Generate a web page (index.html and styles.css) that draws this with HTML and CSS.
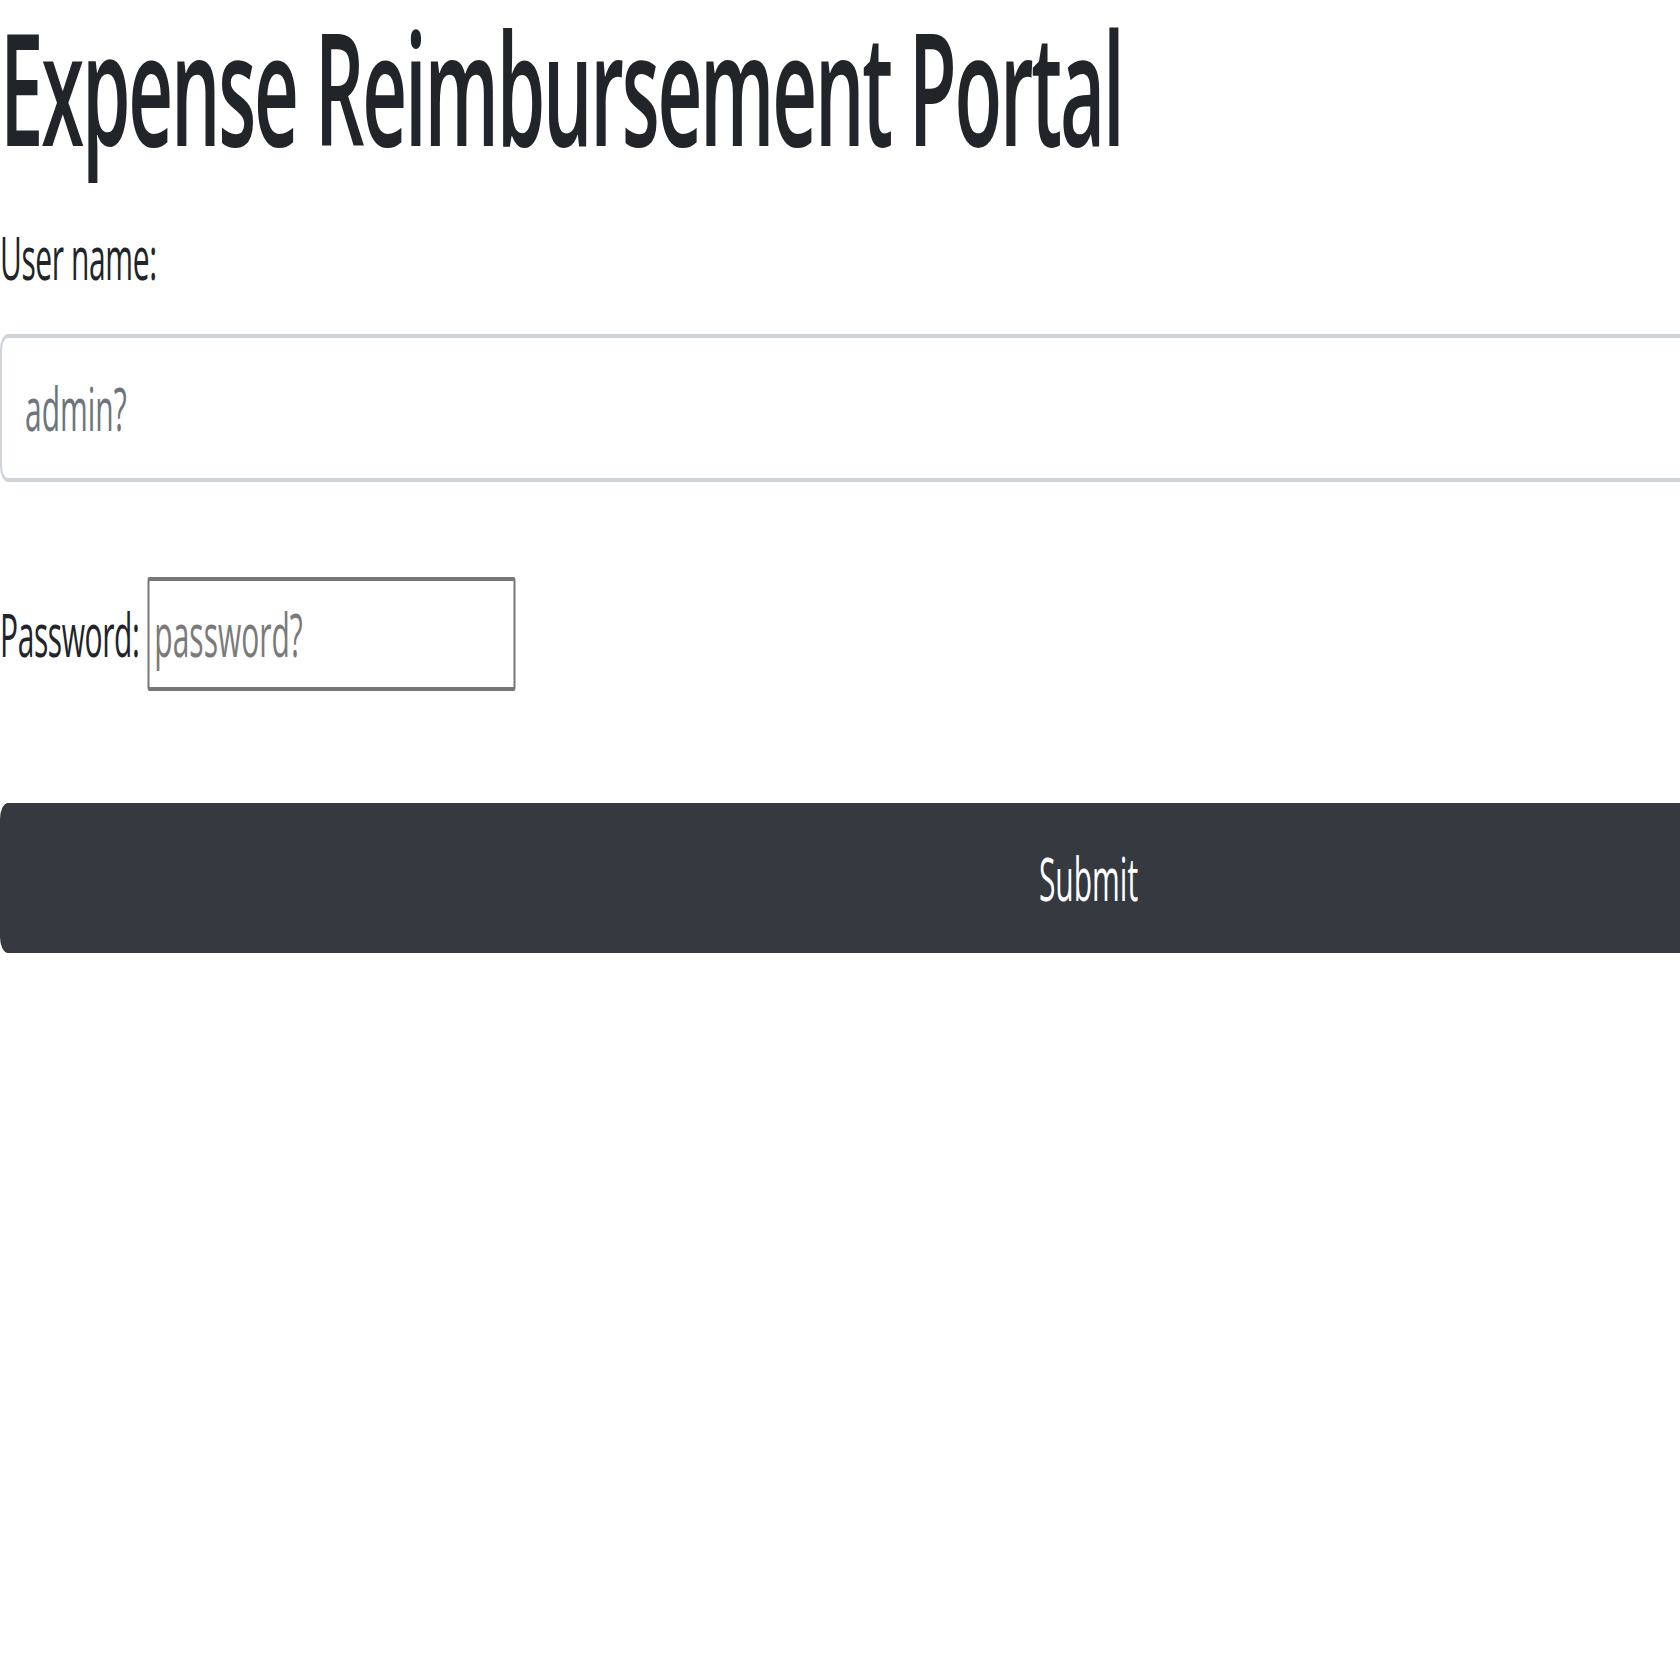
FILE: index.html
```html
<!DOCTYPE html>
<html lang="en">
<head>
<meta charset="utf-8">
<title>Expense Reimbursement Portal</title>
<link rel="stylesheet" href="styles.css">
</head>
<body>
<div class="page">
  <h1 class="title">Expense Reimbursement Portal</h1>
  <form class="login">
    <div class="group">
      <label class="label" for="username">User name:</label>
      <input class="control" id="username" type="text" placeholder="admin?">
    </div>
    <div class="group group-inline">
      <label class="label" for="password">Password:</label> <input class="plain" id="password" type="password" placeholder="password?">
    </div>
    <button class="btn" type="submit">Submit</button>
  </form>
</div>
</body>
</html>
```
FILE: styles.css
```css
html, body {
  margin: 0;
  padding: 0;
  overflow: hidden;
  background: #fff;
}

.page {
  width: 4354px;
  transform: scaleX(0.5);
  transform-origin: 0 0;
  font-family: "Open Sans", "Noto Sans", sans-serif;
  font-size: 60px;
  line-height: 1.5;
  color: #212529;
}

.title {
  margin: 0 0 40px 0;
  font-size: 156px;
  font-weight: 600;
  letter-spacing: -4.5px;
  line-height: 1.1;
}

.login {
  margin: 0;
}

.group {
  margin: 0 0 95px 0;
}

.label {
  display: block;
  margin-bottom: 32px;
  letter-spacing: -0.8px;
}

.control {
  display: block;
  box-sizing: border-box;
  width: 100%;
  height: 148px;
  padding: 0 46px;
  font: inherit;
  color: #495057;
  background: #fff;
  border: 4px solid #ced4da;
  border-radius: 16px;
  outline: none;
}

.control::placeholder {
  color: #6c757d;
  opacity: 1;
}

.group-inline .label {
  display: inline;
  margin: 0;
}

.plain {
  box-sizing: border-box;
  width: 736px;
  height: 114px;
  padding: 0 10px;
  font: inherit;
  line-height: inherit;
  color: #212529;
  background: #fff;
  border: 4px solid #767676;
  border-radius: 4px;
  outline: none;
  vertical-align: baseline;
}

.plain::placeholder {
  color: #7a7a7a;
  opacity: 1;
}

.btn {
  display: block;
  box-sizing: border-box;
  width: 100%;
  height: 150px;
  padding: 0;
  margin: 112px 0 0 0;
  font: inherit;
  color: #fff;
  background: #343a40;
  border: 4px solid #343a40;
  border-radius: 16px;
  text-align: center;
  cursor: pointer;
}
```
